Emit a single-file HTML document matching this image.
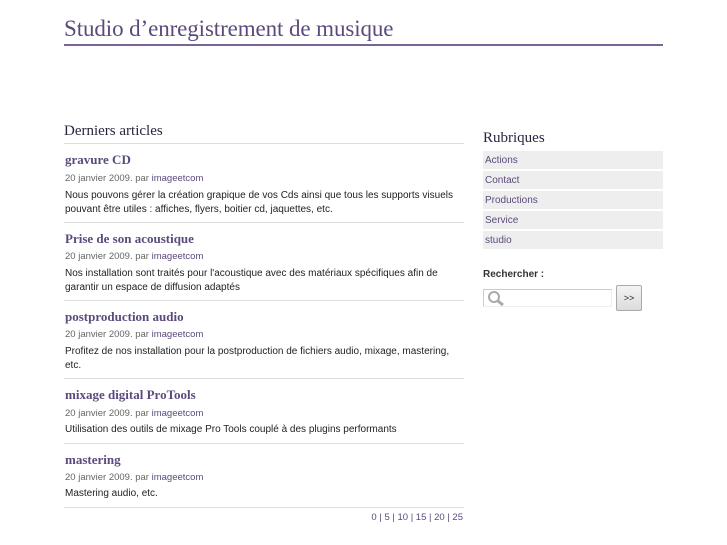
<!DOCTYPE html>
<html><head><meta charset="utf-8"><style>
*{margin:0;padding:0;box-sizing:border-box}
body{width:727px;height:545px;background:#fff;font-family:"Liberation Sans",sans-serif;position:relative;overflow:hidden;color:#222}
.abs{position:absolute}
h1{position:absolute;left:64px;top:16px;font:normal 23px "Liberation Serif",serif;color:#5b4a7c;white-space:nowrap;letter-spacing:-0.1px}
.hl{left:64px;top:44px;width:599px;height:2px;background:#7a6396}
.h2{font:normal 15px "Liberation Serif",serif;color:#2a2540;white-space:nowrap}
.sep{left:64px;width:400px;height:1px;background:#ddd}
.t{left:65px;font:bold 13px "Liberation Serif",serif;color:#5b4a7c;white-space:nowrap}
.m{left:65px;font-size:9.5px;color:#666;white-space:nowrap}
.m span{color:#5b4a7c}
.x{left:65px;font-size:10px;line-height:14px;color:#222;width:400px}
.r{left:483px;width:180px;height:18px;background:#eee;font-size:10px;color:#5b4a7c;padding:3px 2px;line-height:14px}
</style></head><body>
<h1>Studio d’enregistrement de musique</h1>
<div class="abs hl"></div>
<div class="abs h2" style="left:64px;top:123px">Derniers articles</div>
<div class="abs sep" style="top:143px"></div>

<div class="abs t" style="top:152px">gravure CD</div>
<div class="abs m" style="top:173px">20 janvier 2009. par <span>imageetcom</span></div>
<div class="abs x" style="top:189px">Nous pouvons gérer la création grapique de vos Cds ainsi que tous les supports visuels pouvant être utiles : affiches, flyers, boitier cd, jaquettes, etc.</div>
<div class="abs sep" style="top:222px"></div>

<div class="abs t" style="top:231px">Prise de son acoustique</div>
<div class="abs m" style="top:251px">20 janvier 2009. par <span>imageetcom</span></div>
<div class="abs x" style="top:267px">Nos installation sont traités pour l'acoustique avec des matériaux spécifiques afin de garantir un espace de diffusion adaptés</div>
<div class="abs sep" style="top:300px"></div>

<div class="abs t" style="top:309px">postproduction audio</div>
<div class="abs m" style="top:329px">20 janvier 2009. par <span>imageetcom</span></div>
<div class="abs x" style="top:345px">Profitez de nos installation pour la postproduction de fichiers audio, mixage, mastering, etc.</div>
<div class="abs sep" style="top:378px"></div>

<div class="abs t" style="top:387px">mixage digital ProTools</div>
<div class="abs m" style="top:408px">20 janvier 2009. par <span>imageetcom</span></div>
<div class="abs x" style="top:423px">Utilisation des outils de mixage Pro Tools couplé à des plugins performants</div>
<div class="abs sep" style="top:443px"></div>

<div class="abs t" style="top:452px">mastering</div>
<div class="abs m" style="top:472px">20 janvier 2009. par <span>imageetcom</span></div>
<div class="abs x" style="top:487px">Mastering audio, etc.</div>
<div class="abs sep" style="top:507px"></div>
<div class="abs" style="left:300px;width:163px;text-align:right;top:512px;font-size:9.5px;color:#5b4a7c">0 | 5 | 10 | 15 | 20 | 25</div>

<div class="abs h2" style="left:483px;top:130px">Rubriques</div>
<div class="abs r" style="top:151px">Actions</div>
<div class="abs r" style="top:171px">Contact</div>
<div class="abs r" style="top:191px">Productions</div>
<div class="abs r" style="top:211px">Service</div>
<div class="abs r" style="top:231px">studio</div>
<div class="abs" style="left:483px;top:269px;font-size:10px;font-weight:bold;color:#333">Rechercher :</div>
<div class="abs" style="left:483px;top:289px;width:129px;height:18px;border:1px solid #ccc;border-right-color:#eee;border-bottom-color:#eee;background:#fff">
<svg width="22" height="16" style="position:absolute;left:2px;top:0"><circle cx="8" cy="7" r="5" fill="none" stroke="#aaa" stroke-width="2"/><line x1="12" y1="11" x2="17" y2="15" stroke="#aaa" stroke-width="3"/></svg></div>
<div class="abs" style="left:616px;top:285px;width:26px;height:26px;border:1px solid #aaa;border-radius:2px;background:linear-gradient(#f4f4f4,#dcdcdc);font-size:9px;text-align:center;line-height:24px;color:#222">&gt;&gt;</div>
</body></html>
